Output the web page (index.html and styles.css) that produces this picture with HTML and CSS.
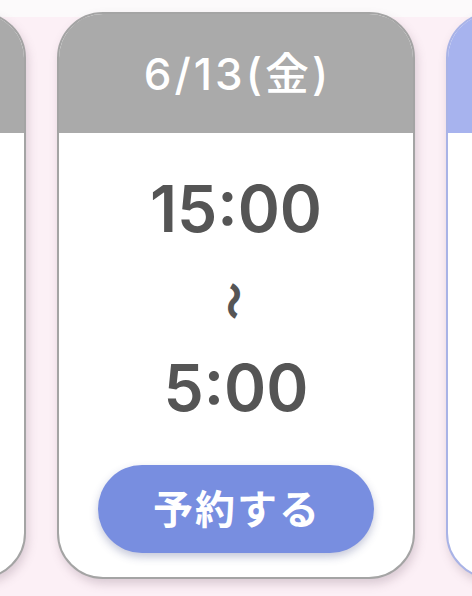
FILE: index.html
```html
<!DOCTYPE html>
<html lang="ja">
<head>
<meta charset="utf-8">
<link rel="stylesheet" href="styles.css">
</head>
<body>
<div class="stage">
  <div class="track">
    <div class="card">
      <div class="card-head">6/12(木)</div>
      <div class="card-body"></div>
    </div>
    <div class="card">
      <div class="card-head">6/13(金)</div>
      <div class="card-body">
        <div class="time time-start">15:00</div>
        <div class="wave">〜</div>
        <div class="time time-end">5:00</div>
        <button class="reserve">予約する</button>
      </div>
    </div>
    <div class="card card-active">
      <div class="card-head">6/14(土)</div>
      <div class="card-body"></div>
    </div>
  </div>
</div>
</body>
</html>
```

FILE: styles.css
```css
html, body {
  margin: 0;
  padding: 0;
}
body {
  width: 472px;
  height: 596px;
  overflow: hidden;
  background: linear-gradient(#fcfafb 0, #fcfafb 17px, #fcf0f6 17px, #fcf0f6 100%);
  font-family: "Inter", "Noto Sans CJK JP", sans-serif;
}
.stage {
  padding-top: 12px;
  width: 472px;
  height: 596px;
  box-sizing: border-box;
  overflow: hidden;
}
.track {
  display: flex;
  justify-content: center;
  gap: 31px;
  width: 472px;
}
.card {
  flex: 0 0 358px;
  height: 567px;
  box-sizing: border-box;
  border: 2px solid #a4a4a4;
  border-radius: 46px;
  background: #fff;
  overflow: hidden;
  display: flex;
  flex-direction: column;
  box-shadow: 2px 5px 10px rgba(120, 90, 110, 0.25);
}
.card-head {
  height: 119px;
  flex: 0 0 119px;
  background: #aaaaaa;
  color: #fff;
  font-size: 44px;
  font-weight: 500;
  letter-spacing: 3px;
  display: flex;
  align-items: center;
  justify-content: center;
  padding: 0 0 6px 3px;
  box-sizing: border-box;
}
.card-active {
  border-color: #a9b3e6;
}
.card-active .card-head {
  background: #a7b3ee;
}
.card-body {
  flex: 1;
  display: flex;
  flex-direction: column;
  align-items: center;
}
.time {
  color: #555555;
  font-size: 64px;
  font-weight: 600;
  line-height: 1;
}
.time-start {
  margin-top: 44px;
}
.wave {
  color: #555555;
  font-family: "Noto Sans CJK JP", sans-serif;
  font-size: 38px;
  font-weight: 900;
  line-height: 1;
  transform: rotate(90deg);
  margin-top: 41px;
}
.time-end {
  margin-top: 36px;
}
.reserve {
  margin-top: auto;
  margin-bottom: 24px;
  width: 276px;
  height: 88px;
  border: none;
  border-radius: 44px;
  background: #788ee0;
  color: #fff;
  font-family: "Noto Sans CJK JP", sans-serif;
  font-size: 40px;
  font-weight: 700;
  letter-spacing: 2px;
  box-shadow: 0 4px 8px rgba(60, 70, 130, 0.3);
  padding: 0 0 4px 2px;
}
```
